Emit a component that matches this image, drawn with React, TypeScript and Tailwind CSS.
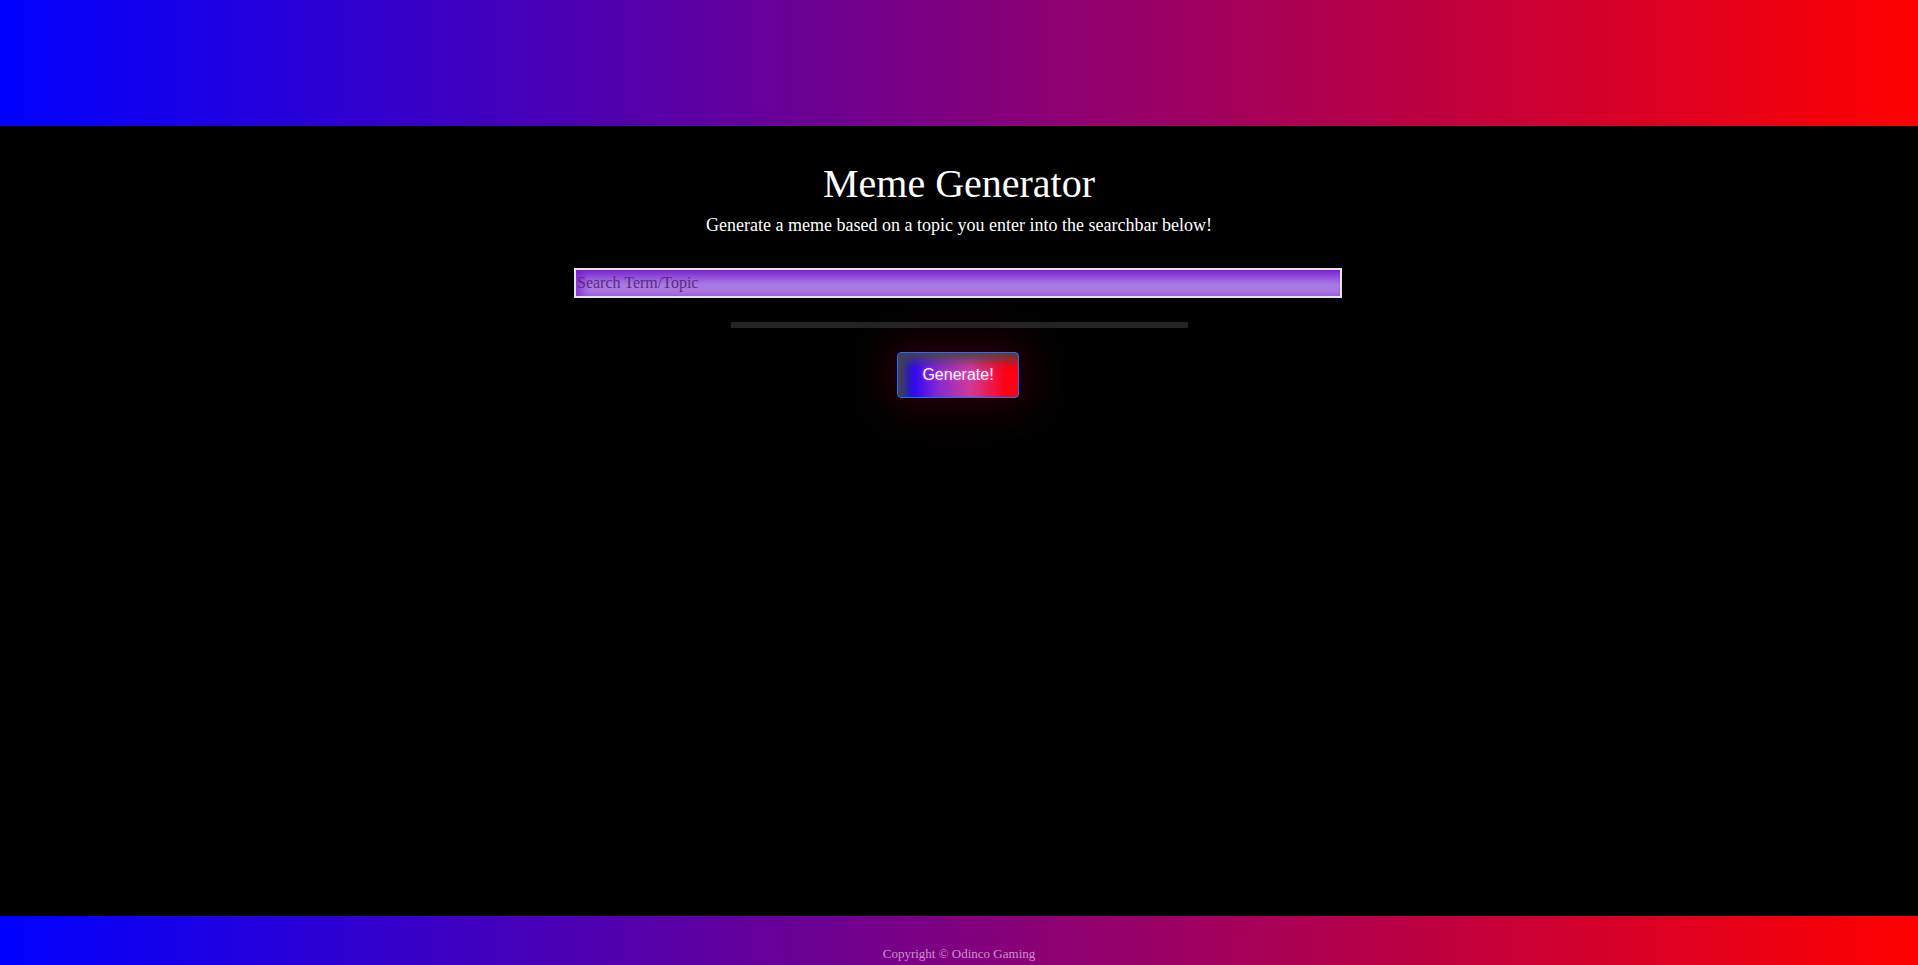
import React from "react";

export default function App() {
  return (
    <div
      className="min-h-screen h-[965px] flex flex-col bg-black overflow-hidden"
      style={{ fontFamily: '"Liberation Serif", "Times New Roman", serif' }}
    >
      <header className="h-[126px] shrink-0 bg-[linear-gradient(to_right,#0000ff,#ff0000)]" />
      <main className="flex-1 flex flex-col items-center">
        <h1 className="mt-[35px] text-[40px] leading-[46px] text-white">Meme Generator</h1>
        <p className="mt-[8px] text-[18px] leading-[21px] text-white">
          Generate a meme based on a topic you enter into the searchbar below!
        </p>
        <input
          type="text"
          placeholder="Search Term/Topic"
          className="mt-[32px] ml-[-2px] w-[768px] h-[30px] border-2 border-[#e4e4e4] px-[1px] text-[16px] text-[#4a1a6a] placeholder:text-[#5b2a7e] bg-[linear-gradient(to_bottom,#7d2fd3,#a878e4_55%,#b285e6)] shadow-[inset_6px_0_10px_rgba(120,20,200,0.7)] outline-none"
          style={{ fontFamily: '"Liberation Serif", "Times New Roman", serif' }}
        />
        <div className="mt-[24px] w-[457px] h-[6px] bg-[#222325]" />
        <button
          className="mt-[24px] ml-[-2px] w-[122px] h-[46px] rounded-[4px] border-[1.5px] border-[#1c72ff] text-[#fff4ff] text-[16px] bg-[linear-gradient(to_right,#1a00ff_8%,#8a2ad0_35%,#d03a98_60%,#ff0014_90%)] shadow-[inset_12px_10px_10px_-2px_rgba(70,70,70,0.9),0_0_40px_10px_rgba(255,0,50,0.16)]"
          style={{ fontFamily: '"Liberation Sans", Arial, sans-serif', textShadow: "0 0 3px rgba(255,120,255,0.6)" }}
        >
          Generate!
        </button>
      </main>
      <footer className="h-[49px] shrink-0 flex items-end justify-center pb-[4px] bg-[linear-gradient(to_right,#0000ff,#ff0000)]">
        <span className="text-[13px] leading-[15px] text-[#d6a0d6] opacity-90">Copyright © Odinco Gaming</span>
      </footer>
    </div>
  );
}
